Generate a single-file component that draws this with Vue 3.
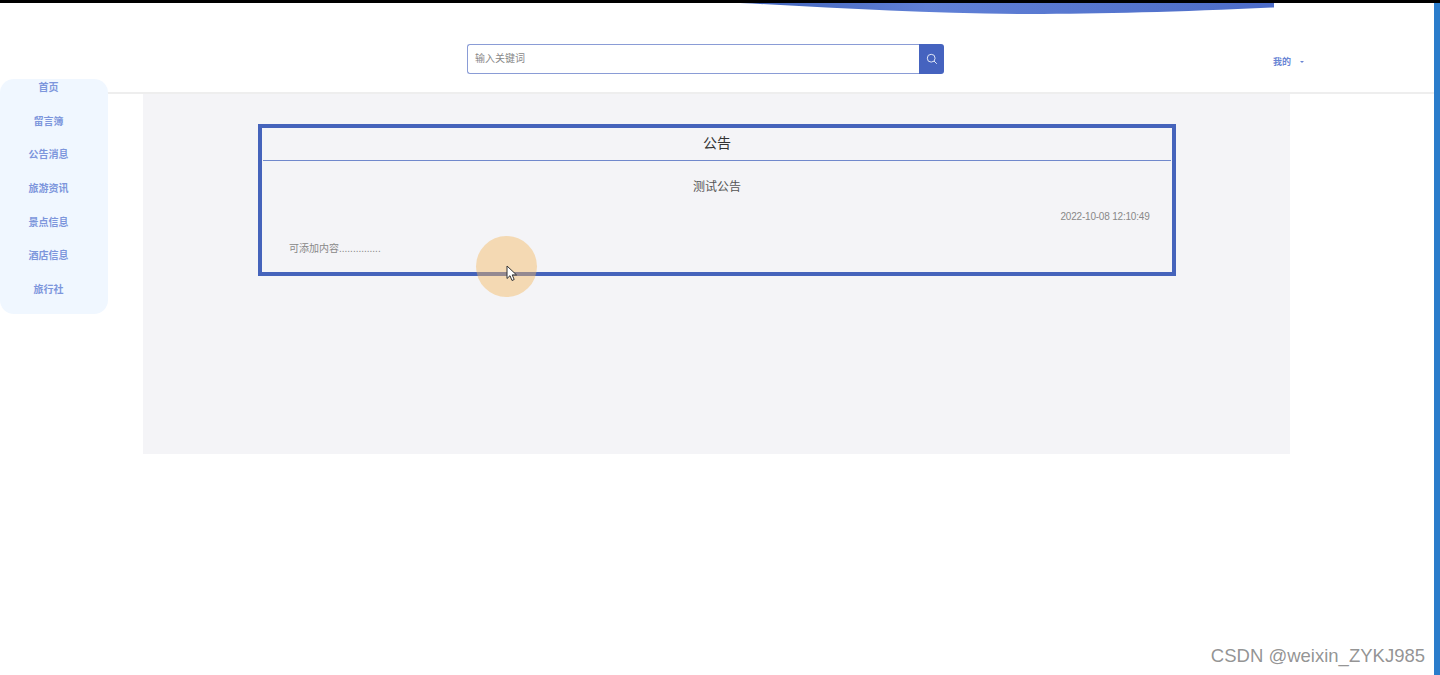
<script setup>
const menu = ['首页', '留言簿', '公告消息', '旅游资讯', '景点信息', '酒店信息', '旅行社']
</script>

<template>
  <div class="page">
    <div class="topline"></div>
    <div class="shell">
      <div class="content">
        <header class="header">
          <div class="search">
            <div class="search-input">输入关键词</div>
            <div class="search-btn">
              <svg width="12" height="12" viewBox="0 0 12 12" fill="none" stroke="#dfe6f6" stroke-width="1">
                <circle cx="5.2" cy="5.2" r="3.9" />
                <path d="M8 8l2.8 2.8" />
              </svg>
            </div>
          </div>
          <div class="mine">我的<span class="caret"></span></div>
        </header>
        <main class="main">
          <section class="card">
            <h2 class="card-title">公告</h2>
            <h3 class="notice-title">测试公告</h3>
            <p class="notice-time">2022-10-08 12:10:49</p>
            <p class="notice-body">可添加内容...............</p>
          </section>
        </main>
      </div>
      <div class="strip"></div>
    </div>

    <svg class="swoosh" width="540" height="12" viewBox="0 0 540 12">
      <defs>
        <linearGradient id="sw" x1="0" x2="1" y1="0" y2="0">
          <stop offset="0" stop-color="#3f62b8" />
          <stop offset="0.35" stop-color="#6080d6" />
          <stop offset="1" stop-color="#4c6cc8" />
        </linearGradient>
      </defs>
      <path d="M0 0H534V4.5C440 9 360 11 290 11C190 11 100 5 0 0Z" fill="url(#sw)" />
    </svg>

    <nav class="side">
      <a v-for="item in menu" :key="item" class="side-item">{{ item }}</a>
    </nav>

    <div class="spot"></div>
    <svg class="cursor" width="12" height="17" viewBox="0 0 12 17">
      <path d="M1 1v12.5l3-2.8 2 4.8 2.2-1-2-4.6h4.3z" fill="#fff" stroke="#333" stroke-width="1" />
    </svg>

    <div class="mark">CSDN @weixin_ZYKJ985</div>
  </div>
</template>

<style scoped>
.page {
  position: relative;
  width: 1440px;
  height: 675px;
  overflow: hidden;
  background: #fff;
  font-family: "Liberation Sans", "Noto Sans CJK SC", sans-serif;
}

.topline {
  height: 3px;
  background: #000;
}

.shell {
  display: flex;
  height: 672px;
}

.content {
  flex: 1;
}

.strip {
  width: 6px;
  background: #2a7ccb;
}

.header {
  height: 91px;
  border-bottom: 2px solid #eeeeee;
  display: flex;
  align-items: flex-start;
  padding: 41px 130px 0 466.5px;
  box-sizing: border-box;
  justify-content: space-between;
}

.search {
  display: flex;
  width: 477.5px;
  height: 30px;
}

.search-input {
  flex: 1;
  border: 1px solid #8a9cd6;
  border-right: none;
  border-radius: 3px 0 0 3px;
  font-size: 10px;
  line-height: 28px;
  padding-left: 7.5px;
  color: #888;
}

.search-btn {
  width: 25px;
  background: #4563bf;
  border-radius: 0 3px 3px 0;
  display: flex;
  align-items: center;
  justify-content: center;
}

.mine {
  margin-top: 11px;
  font-size: 9px;
  line-height: 14px;
  font-weight: 700;
  color: #6a85d4;
  display: flex;
  align-items: center;
}

.caret {
  margin-left: 9px;
  border-left: 2px solid transparent;
  border-right: 2px solid transparent;
  border-top: 2px solid #6a85d4;
}

.main {
  margin-left: 143px;
  width: 1147px;
  height: 360px;
  padding: 30px 0 0 115px;
  box-sizing: border-box;
  background: #f4f4f7;
}

.card {
  width: 918px;
  height: 152px;
  box-sizing: border-box;
  border: 4px solid #4563bb;
  color: #333;
}

.card-title {
  margin: 0 1px;
  height: 32px;
  line-height: 30px;
  border-bottom: 1px solid #7088cc;
  text-align: center;
  font-size: 14px;
  font-weight: 400;
  color: #333;
}

.notice-title {
  margin: 17px 0 0;
  line-height: 18px;
  text-align: center;
  font-size: 12px;
  font-weight: 400;
  color: #555;
}

.notice-time {
  margin: 14px 22.5px 0 0;
  line-height: 14px;
  text-align: right;
  font-size: 10px;
  letter-spacing: -0.2px;
  color: #888;
}

.notice-body {
  margin: 18px 0 0 27px;
  line-height: 14px;
  font-size: 10px;
  color: #888;
}

.swoosh {
  position: absolute;
  left: 740px;
  top: 3px;
}

.side {
  position: absolute;
  left: 0;
  top: 79px;
  width: 108px;
  height: 235px;
  box-sizing: border-box;
  padding: 1px 11px 0 0;
  background: #f0f7ff;
  border-radius: 14px;
  display: flex;
  flex-direction: column;
  overflow: hidden;
}

.side-item {
  flex: none;
  height: 33.65px;
  line-height: 16px;
  text-align: center;
  font-size: 10px;
  font-weight: 700;
  color: #7d96dc;
}

.spot {
  position: absolute;
  left: 476px;
  top: 235.5px;
  width: 61px;
  height: 61px;
  border-radius: 50%;
  background: rgba(245, 185, 95, 0.45);
}

.cursor {
  position: absolute;
  left: 505.5px;
  top: 265px;
}

.mark {
  position: absolute;
  right: 15px;
  top: 645px;
  font-size: 18.5px;
  line-height: 22px;
  color: rgba(120, 120, 120, 0.8);
}
</style>
